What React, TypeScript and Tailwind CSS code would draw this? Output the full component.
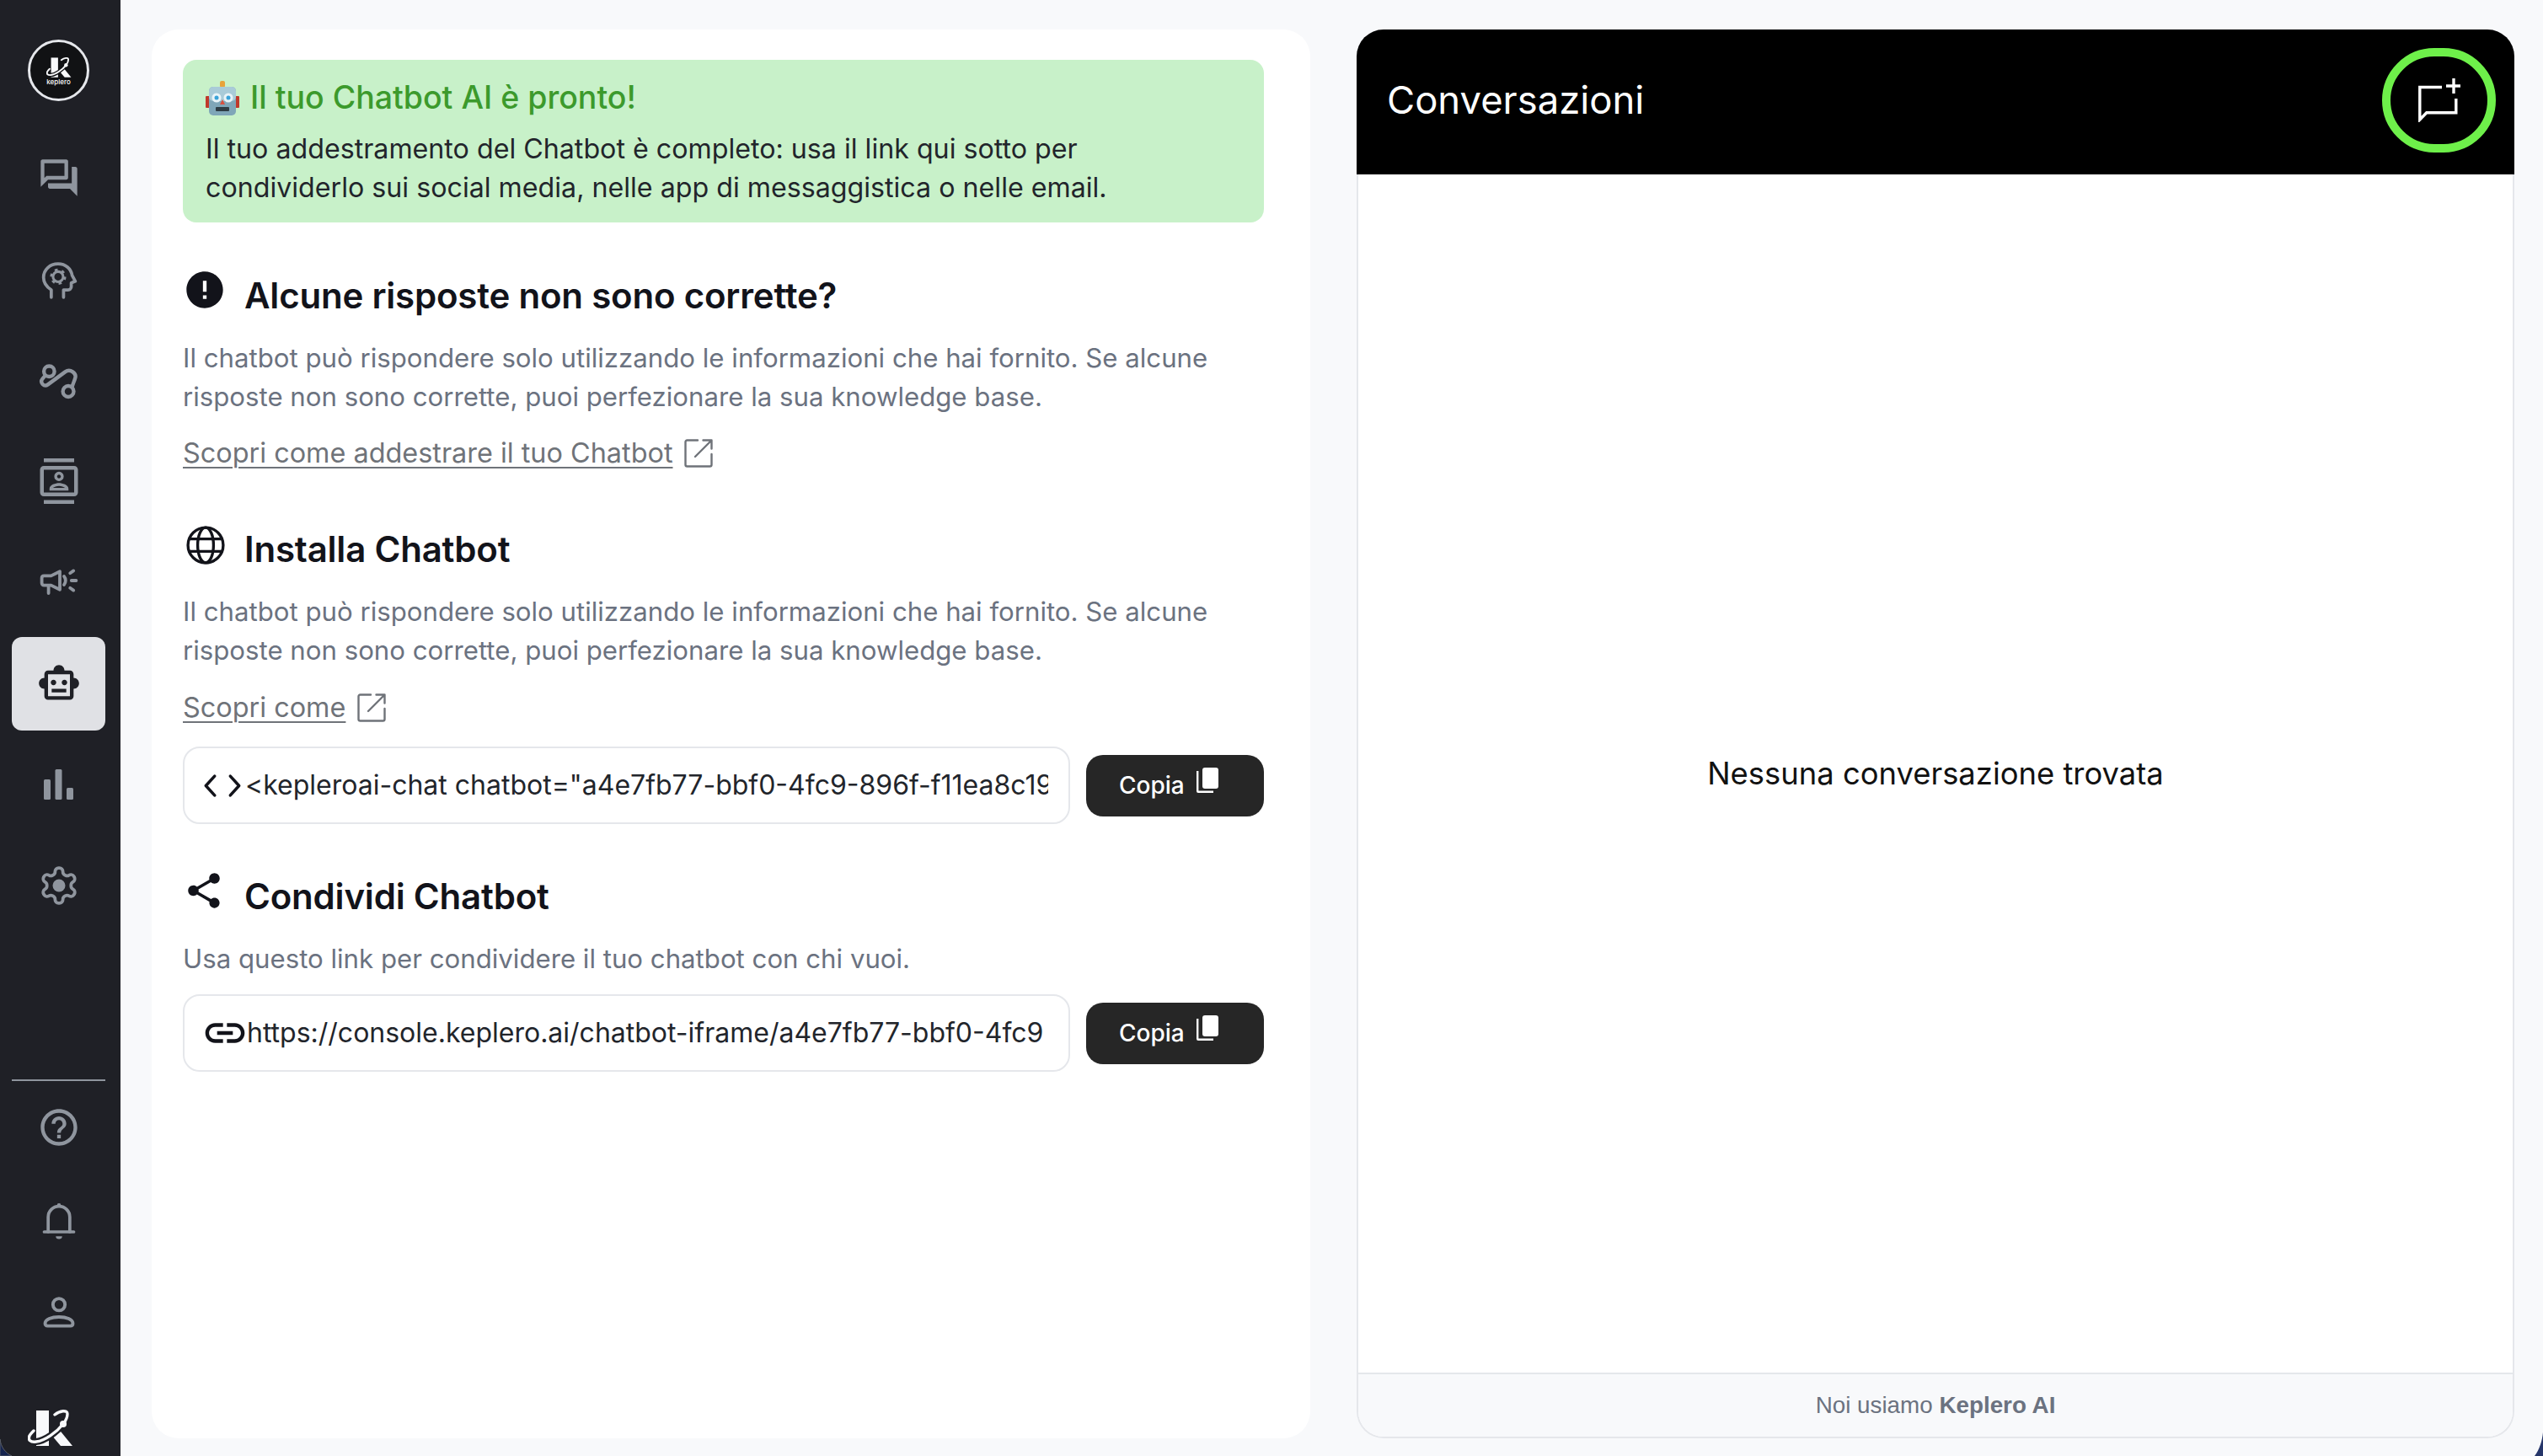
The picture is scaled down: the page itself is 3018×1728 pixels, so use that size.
import React from "react";
import {
  MdError,
  MdLink,
  MdOutlineContacts,
  MdOutlineForum,
  MdOutlineHelpOutline,
  MdOutlineSmartToy,
  MdShare,
} from "react-icons/md";

const KLogo = ({ className, bg }: { className: string; bg: string }) => (
  <svg viewBox="0 0 54 46" className={className}>
    <rect x="10" y="4" width="15" height="42" fill="#f8f9fb" />
    <path d="M35 24l18 22H39L28 33z" fill="#f8f9fb" />
    <path
      d="M32 9C38 4 47 3 47 8c0 4-1 7-5 12C34 30 20 40 10 41c-7 1-10-2-8-7 1-2 3-4 5-6"
      fill="none"
      stroke={bg}
      strokeWidth="8"
    />
    <path
      d="M32 9C38 4 47 3 47 8c0 4-1 7-5 12C34 30 20 40 10 41c-7 1-10-2-8-7 1-2 3-4 5-6"
      fill="none"
      stroke="#f8f9fb"
      strokeWidth="3.4"
      strokeLinecap="round"
    />
    <circle cx="42" cy="20" r="4" fill="#f8f9fb" />
  </svg>
);

const RouteIcon = ({ className }: { className: string }) => (
  <svg viewBox="0 0 24 24" fill="none" stroke="currentColor" strokeWidth="2.1" strokeLinecap="round" className={className}>
    <circle cx="6.4" cy="6.6" r="3" />
    <circle cx="17.3" cy="18" r="3.1" />
    <path d="M4.2 8.9 2.6 10.8C.9 13 3.5 15.7 5.7 14.1l9.8-7.2c3-2.1 6.7.9 5.7 3.6-.4 1.5-1.1 2.8-1.7 4.9" />
  </svg>
);

const HeadIcon = ({ className }: { className: string }) => (
  <svg viewBox="0 0 24 24" fill="none" stroke="currentColor" strokeWidth="1.8" strokeLinecap="round" strokeLinejoin="round" className={className}>
    <path d="M7.6 21.5v-4.2C5 15.6 3.2 13.2 3.2 10.2 3.2 5.8 6.8 2.5 11.5 2.5c4.2 0 7.4 2.7 8 6.6l1.8 3.3-2.3.9v2.2c0 1-.8 1.8-1.8 1.8h-2.6v4.2" />
    <circle cx="11.5" cy="9.8" r="2.9" strokeWidth="1.5" />
    <circle cx="11.5" cy="9.8" r="3.9" strokeWidth="1.4" strokeDasharray="1.7 2.38" strokeLinecap="butt" />
  </svg>
);

const MegaphoneIcon = ({ className }: { className: string }) => (
  <svg viewBox="0 0 24 24" fill="none" stroke="currentColor" strokeWidth="1.9" strokeLinecap="round" strokeLinejoin="round" className={className}>
    <path d="M1.8 9.5c0-.8.5-1.3 1.3-1.3h4.2l5.2-2.6v10.8l-5.2-2.6H3.1c-.8 0-1.3-.5-1.3-1.3z" />
    <path d="M5.8 14v4.5" />
    <path d="M15 8.5c1.2 1.4 1.2 3.6 0 5" />
    <path d="M18.6 6.6l2-1.4M19.4 11h2.8M18.6 15.4l2 1.4" />
  </svg>
);

const GearIcon = ({ className }: { className: string }) => (
  <svg viewBox="0 0 24 24" fill="none" stroke="currentColor" strokeWidth="1.8" strokeLinejoin="round" className={className}>
    <path d="M12.22 2h-.44a2 2 0 0 0-2 2v.18a2 2 0 0 1-1 1.73l-.43.25a2 2 0 0 1-2 0l-.15-.08a2 2 0 0 0-2.73.73l-.22.38a2 2 0 0 0 .73 2.73l.15.1a2 2 0 0 1 1 1.72v.51a2 2 0 0 1-1 1.74l-.15.09a2 2 0 0 0-.73 2.73l.22.38a2 2 0 0 0 2.73.73l.15-.08a2 2 0 0 1 2 0l.43.25a2 2 0 0 1 1 1.73V20a2 2 0 0 0 2 2h.44a2 2 0 0 0 2-2v-.18a2 2 0 0 1 1-1.73l.43-.25a2 2 0 0 1 2 0l.15.08a2 2 0 0 0 2.73-.73l.22-.39a2 2 0 0 0-.73-2.73l-.15-.08a2 2 0 0 1-1-1.74v-.5a2 2 0 0 1 1-1.74l.15-.09a2 2 0 0 0 .73-2.73l-.22-.38a2 2 0 0 0-2.73-.73l-.15.08a2 2 0 0 1-2 0l-.43-.25a2 2 0 0 1-1-1.73V4a2 2 0 0 0-2-2z" />
    <circle cx="12" cy="12" r="3.6" fill="currentColor" stroke="none" />
  </svg>
);

const BellIcon = ({ className }: { className: string }) => (
  <svg viewBox="0 0 24 24" fill="none" stroke="currentColor" strokeWidth="1.6" strokeLinecap="round" className={className}>
    <path d="M6.5 18v-7.5a5.5 5.5 0 0 1 11 0V18" />
    <path d="M4.5 18h15" />
    <circle cx="12" cy="4.4" r="1" fill="currentColor" stroke="none" />
    <path d="M10.4 20.2h3.2a1.6 1.4 0 0 1-3.2 0z" fill="currentColor" stroke="none" />
  </svg>
);

const UserIcon = ({ className }: { className: string }) => (
  <svg viewBox="0 0 24 24" fill="none" stroke="currentColor" strokeWidth="1.8" className={className}>
    <circle cx="12" cy="7.5" r="3.3" />
    <path d="M5.8 19.2c-.9 0-1.4-.5-1.4-1.3 0-2.2 3.5-3.6 7.6-3.6s7.6 1.4 7.6 3.6c0 .8-.5 1.3-1.4 1.3z" />
  </svg>
);

const RobotEmoji = () => (
  <svg viewBox="0 0 40 44" className="w-[40px] h-[44px] shrink-0">
    <rect x="0" y="20" width="5" height="14" rx="1" fill="#c0392b" />
    <rect x="35" y="20" width="5" height="14" rx="1" fill="#c0392b" />
    <rect x="17" y="2" width="6" height="8" rx="2" fill="#e8a33a" />
    <rect x="4" y="9" width="32" height="34" rx="5" fill="#7fa6b8" />
    <rect x="4" y="9" width="32" height="17" rx="5" fill="#a9cbd8" />
    <circle cx="13" cy="22" r="5.5" fill="#e9f4f8" />
    <circle cx="27" cy="22" r="5.5" fill="#e9f4f8" />
    <circle cx="13" cy="22" r="2.5" fill="#3aa3d8" />
    <circle cx="27" cy="22" r="2.5" fill="#3aa3d8" />
    <path d="M20 24l3 6h-6z" fill="#d9503f" />
    <rect x="12" y="33" width="16" height="5" rx="1" fill="#2e3d45" />
  </svg>
);

const CopyIcon = () => (
  <svg viewBox="0 0 26 32" className="w-[26px] h-[32px] shrink-0" fill="white">
    <rect x="7" y="0" width="19" height="25" rx="3" />
    <path d="M0 4h2.4v23.6H20V30H2a2 2 0 0 1-2-2z" />
  </svg>
);

const ChatPlusIcon = () => (
  <svg viewBox="0 0 50 52" className="w-[50px] h-[52px]" fill="none" stroke="white" strokeWidth="3.4">
    <path d="M28 10.5H1.8v38.5l8-8.2h35V24" />
    <path d="M42 0v18M33 9h18" />
  </svg>
);

const CodeIcon = () => (
  <svg viewBox="0 0 44 28" className="w-[46px] h-[29px] shrink-0" fill="none" stroke="#12131a" strokeWidth="3.4" strokeLinecap="round" strokeLinejoin="round">
    <path d="M13 3 3 14l10 11" />
    <path d="M31 3l10 11-10 11" />
  </svg>
);

const GlobeIcon = () => (
  <svg viewBox="0 0 44 44" className="w-[46px] h-[46px] ml-[4px] mt-[2px]" fill="none" stroke="#12131a" strokeWidth="3.2">
    <circle cx="22" cy="22" r="20" />
    <ellipse cx="22" cy="22" rx="9" ry="20" />
    <path d="M4 15h36M4 29h36" />
  </svg>
);

const OpenIcon = () => (
  <svg viewBox="0 0 36 36" className="w-[36px] h-[36px] shrink-0" fill="none" stroke="#6f7379" strokeWidth="2.4" strokeLinecap="round" strokeLinejoin="round">
    <path d="M17 2.5H4.5a2 2 0 0 0-2 2v27a2 2 0 0 0 2 2h27a2 2 0 0 0 2-2V19" />
    <path d="M14 22 33.5 2.5M23.5 2.5h10v10" />
  </svg>
);

const SideItem = ({ children, active }: { children: React.ReactNode; active?: boolean }) => (
  <div className="h-[120px] w-full flex items-center justify-center">
    <div
      className={
        active
          ? "w-[111px] h-[111px] rounded-[12px] bg-[#e0e1e5] text-[#1f2026] flex items-center justify-center"
          : "text-[#8f959e] flex items-center justify-center"
      }
    >
      {children}
    </div>
  </div>
);

const Heading = ({ icon, children }: { icon: React.ReactNode; children: React.ReactNode }) => (
  <div className="flex items-start h-[44px]">
    <div className="w-[73px] -mt-[8px] shrink-0 flex">{icon}</div>
    <h2 className="text-[42px] leading-[44px] font-semibold text-[#12131a] tracking-[-0.2px]">{children}</h2>
  </div>
);

const ExtLink = ({ children }: { children: React.ReactNode }) => (
  <a className="flex items-center gap-[13px] text-[32.4px] leading-[40px]">
    <span className="underline underline-offset-[5px] decoration-2 text-[#6f7379]">{children}</span>
    <OpenIcon />
  </a>
);

const CopyRow = ({ icon, text, top }: { icon: React.ReactNode; text: string; top: string }) => (
  <div className={`flex items-center gap-[19px] ${top}`}>
    <div className="w-[1053px] h-[92px] shrink-0 border-2 border-[#e5e7eb] rounded-[20px] flex items-center gap-[4px] pl-[22px] pr-[24px] text-[#22252b] text-[32px]">
      {icon}
      <span className="overflow-hidden whitespace-nowrap">{text}</span>
    </div>
    <button className="w-[211px] h-[73px] bg-[#262626] rounded-[20px] text-white text-[28px] font-medium flex items-center justify-start pl-[39px] gap-[14px]">
      Copia
      <span className="-mt-[10px]">
        <CopyIcon />
      </span>
    </button>
  </div>
);

const desc =
  "Il chatbot può rispondere solo utilizzando le informazioni che hai fornito. Se alcune risposte non sono corrette, puoi perfezionare la sua knowledge base.";

export default function App() {
  return (
    <div className="relative h-screen w-full overflow-hidden flex bg-[#f8f9fb] font-['Inter',sans-serif]">
      <aside className="w-[143px] shrink-0 h-full bg-[#1f2026] flex flex-col items-center pt-[47px] pr-[4px]">
        <div className="w-[73px] h-[73px] rounded-full border-[3px] border-[#e5e7eb] bg-[#111214] flex flex-col items-center justify-center mb-[31px]">
          <KLogo bg="#111214" className="w-[30px] h-[26px]" />
          <span className="text-[8px] leading-[10px] text-white font-medium">keplero</span>
        </div>
        <SideItem><MdOutlineForum className="w-[52px] h-[52px]" /></SideItem>
        <SideItem><HeadIcon className="w-[50px] h-[50px] mt-[4px]" /></SideItem>
        <SideItem><RouteIcon className="w-[50px] h-[50px] mt-[2px]" /></SideItem>
        <SideItem><MdOutlineContacts className="w-[54px] h-[54px]" /></SideItem>
        <SideItem><MegaphoneIcon className="w-[48px] h-[48px]" /></SideItem>
        <SideItem active><MdOutlineSmartToy className="w-[52px] h-[52px]" /></SideItem>
        <SideItem>
          <svg viewBox="0 0 36 36" className="w-[36px] h-[36px]" fill="currentColor">
            <rect x="0" y="12" width="8" height="24" rx="1.5" />
            <rect x="13.5" y="0" width="8" height="36" rx="1.5" />
            <rect x="27" y="22" width="8" height="14" rx="1.5" />
          </svg>
        </SideItem>
        <SideItem><GearIcon className="w-[50px] h-[50px]" /></SideItem>
        <div className="mt-auto w-[111px] h-[2px] shrink-0 bg-[#8f959e]" />
        <div className="h-[110px] flex items-center text-[#8f959e]"><MdOutlineHelpOutline className="w-[52px] h-[52px]" /></div>
        <div className="h-[110px] flex items-center text-[#8f959e]"><BellIcon className="w-[56px] h-[56px]" /></div>
        <div className="h-[110px] flex items-center text-[#8f959e]"><UserIcon className="w-[52px] h-[52px]" /></div>
        <div className="w-full pt-[57px] pb-[12px] pl-[33px]">
          <KLogo bg="#1f2026" className="w-[54px] h-[46px]" />
        </div>
      </aside>

      <main className="flex-1 min-w-0 flex gap-[55px] pl-[37px] pr-[34px] pt-[35px] pb-[21px]">
        <section className="w-[1375px] shrink-0 bg-white rounded-[32px] pl-[37px] pr-[55px] pt-[36px]">
          <div className="h-[193px] bg-[#c8f1c9] rounded-[16px] px-[27px] pt-[21px]">
            <div className="flex items-center gap-[13px] h-[48px] text-[#3c9a2c] text-[37.5px] font-medium">
              <RobotEmoji />
              Il tuo Chatbot AI è pronto!
            </div>
            <p className="mt-[14px] max-w-[1150px] text-[#22252b] text-[32.2px] leading-[46px]">
              Il tuo addestramento del Chatbot è completo: usa il link qui sotto per condividerlo sui social media, nelle
              app di messaggistica o nelle email.
            </p>
          </div>

          <div className="mt-[65px]">
            <Heading icon={<MdError className="w-[52px] h-[52px] -mt-[3px] text-[#12131a]" />}>
              Alcune risposte non sono corrette?
            </Heading>
            <p className="mt-[29px] text-[#6b7280] text-[31.2px] leading-[46px]">{desc}</p>
            <div className="mt-[24px]"><ExtLink>Scopri come addestrare il tuo Chatbot</ExtLink></div>
          </div>

          <div className="mt-[72px]">
            <Heading icon={<GlobeIcon />}>Installa Chatbot</Heading>
            <p className="mt-[29px] text-[#6b7280] text-[31.2px] leading-[46px]">{desc}</p>
            <div className="mt-[25px]"><ExtLink>Scopri come</ExtLink></div>
            <CopyRow top="mt-[26px]" icon={<CodeIcon />} text={'<kepleroai-chat chatbot="a4e7fb77-bbf0-4fc9-896f-f11ea8c19'} />
          </div>

          <div className="mt-[64px]">
            <Heading icon={<MdShare className="w-[50px] h-[50px] -mt-[2px] text-[#12131a]" />}>Condividi Chatbot</Heading>
            <p className="mt-[29px] text-[#6b7280] text-[31.2px] leading-[46px]">
              Usa questo link per condividere il tuo chatbot con chi vuoi.
            </p>
            <CopyRow
              top="mt-[19px]"
              icon={<MdLink className="w-[56px] h-[56px] shrink-0 -ml-[2px] -mr-[6px] text-[#12131a]" />}
              text="https://console.keplero.ai/chatbot-iframe/a4e7fb77-bbf0-4fc9"
            />
          </div>
        </section>

        <section className="flex-1 min-w-0 flex flex-col rounded-[32px] border-2 border-t-0 border-[#e5e7eb] bg-white">
          <header className="h-[172px] shrink-0 -mx-[2px] rounded-t-[32px] bg-black flex items-center justify-between pl-[36px] pr-[22px] pb-[4px]">
            <h1 className="text-white text-[45.4px] font-normal">Conversazioni</h1>
            <div className="w-[135px] h-[124px] rounded-full border-[10px] border-[#6ef04a] flex items-center justify-center">
              <ChatPlusIcon />
            </div>
          </header>
          <div className="flex-1 flex items-center justify-center text-[#111] text-[36.4px]">
            Nessuna conversazione trovata
          </div>
          <footer className="h-[76px] shrink-0 rounded-b-[30px] border-t-2 border-[#e5e7eb] bg-[#f8f9fb] flex items-center justify-center text-[27.8px] text-[#6b7280] font-['Liberation_Sans',sans-serif]">
            <span>
              Noi usiamo <b className="font-bold">Keplero AI</b>
            </span>
          </footer>
        </section>
      </main>

      <svg viewBox="0 0 14 20" className="absolute left-0 bottom-0 w-[14px] h-[20px]">
        <path d="M0 0C1 9 6 16 14 20H0z" fill="#16244f" stroke="#5a5e66" strokeWidth="1" />
      </svg>
      <svg viewBox="0 0 10 28" className="absolute right-0 bottom-0 w-[10px] h-[28px]">
        <path d="M10 0C9 10 6 20 0 28h10z" fill="#26366a" />
      </svg>
    </div>
  );
}
